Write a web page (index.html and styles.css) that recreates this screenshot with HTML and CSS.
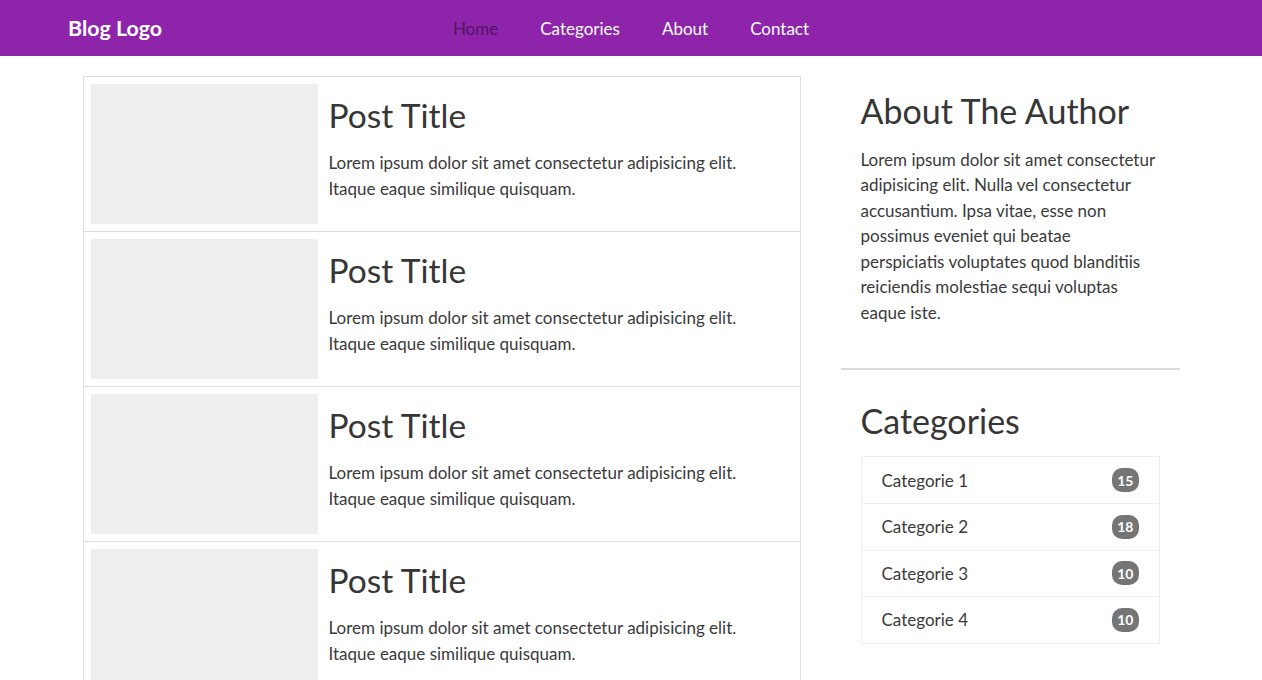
FILE: index.html
```html
<!DOCTYPE html>
<html lang="en">
<head>
<meta charset="utf-8">
<title>Blog</title>
<link rel="stylesheet" href="styles.css">
</head>
<body>
<header class="navbar">
  <a class="brand" href="#">Blog Logo</a>
  <nav class="nav">
    <a class="nav-link active" href="#">Home</a>
    <a class="nav-link" href="#">Categories</a>
    <a class="nav-link" href="#">About</a>
    <a class="nav-link" href="#">Contact</a>
  </nav>
  <div></div>
</header>
<main class="page">
  <section class="posts">
    <article class="post">
      <div class="thumb"></div>
      <div class="post-body">
        <h2 class="post-title">Post Title</h2>
        <p class="post-text">Lorem ipsum dolor sit amet consectetur adipisicing elit. Itaque eaque similique quisquam.</p>
      </div>
    </article>
    <article class="post">
      <div class="thumb"></div>
      <div class="post-body">
        <h2 class="post-title">Post Title</h2>
        <p class="post-text">Lorem ipsum dolor sit amet consectetur adipisicing elit. Itaque eaque similique quisquam.</p>
      </div>
    </article>
    <article class="post">
      <div class="thumb"></div>
      <div class="post-body">
        <h2 class="post-title">Post Title</h2>
        <p class="post-text">Lorem ipsum dolor sit amet consectetur adipisicing elit. Itaque eaque similique quisquam.</p>
      </div>
    </article>
    <article class="post">
      <div class="thumb"></div>
      <div class="post-body">
        <h2 class="post-title">Post Title</h2>
        <p class="post-text">Lorem ipsum dolor sit amet consectetur adipisicing elit. Itaque eaque similique quisquam.</p>
      </div>
    </article>
  </section>
  <aside class="sidebar">
    <div class="widget about">
      <h2 class="widget-title">About The Author</h2>
      <p class="widget-text">Lorem ipsum dolor sit amet consectetur<br>adipisicing elit. Nulla vel consectetur<br>accusantium. Ipsa vitae, esse non<br>possimus eveniet qui beatae<br>perspiciatis voluptates quod blanditiis<br>reiciendis molestiae sequi voluptas<br>eaque iste.</p>
    </div>
    <hr class="divider">
    <div class="widget">
      <h2 class="widget-title">Categories</h2>
      <ul class="cat-list">
        <li class="cat-item"><span>Categorie 1</span><span class="badge">15</span></li>
        <li class="cat-item"><span>Categorie 2</span><span class="badge">18</span></li>
        <li class="cat-item"><span>Categorie 3</span><span class="badge">10</span></li>
        <li class="cat-item"><span>Categorie 4</span><span class="badge">10</span></li>
      </ul>
    </div>
  </aside>
</main>
</body>
</html>
```
FILE: styles.css
```css
* { box-sizing: border-box; }
body {
  margin: 0;
  font-family: "Lato", "Noto Sans", sans-serif;
  font-size: 17px;
  color: #3a3a3a;
  background: #fff;
}
a { text-decoration: none; }

.navbar {
  height: 56px;
  background: #8e24aa;
  display: grid;
  grid-template-columns: 1fr auto 1fr;
  align-items: center;
  padding: 0 68px;
}
.brand {
  color: #fff;
  font-weight: 700;
  font-size: 21.4px;
  justify-self: start;
}
.nav { display: flex; }
.nav-link {
  color: #fff;
  font-size: 17px;
  padding: 0 21px;
}
.nav-link.active { color: #4e1663; }

.page {
  width: 1097px;
  margin: 20px auto 0;
  display: flex;
  gap: 40px;
  align-items: flex-start;
}
.posts {
  width: 718px;
  flex: none;
  border: 1px solid #dedede;
}
.post {
  display: flex;
  padding: 7px;
  border-top: 1px solid #dedede;
}
.post:first-child { border-top: none; }
.thumb {
  width: 227px;
  height: 140px;
  background: #eee;
  flex: none;
}
.post-body { margin-left: 11px; }
.post-title {
  font-size: 33.5px;
  font-weight: 400;
  margin: 11px 0 15px;
  line-height: 1.2;
  color: #363636;
}
.post-text {
  margin: 0;
  max-width: 440px;
  line-height: 26px;
}

.sidebar { width: 339px; flex: none; }
.widget { padding: 15px 20px 20px; }
.widget-title {
  font-size: 34px;
  font-weight: 400;
  line-height: 1.2;
  margin: 0 0 15px;
  color: #363636;
}
.widget-text {
  margin: 0;
  line-height: 25.5px;
  white-space: nowrap;
}
.divider {
  border: none;
  border-top: 2px solid #ddd;
  margin: 23px 0 16px;
}
.widget + .divider + .widget .widget-title { margin-bottom: 14px; }
.cat-list {
  list-style: none;
  margin: 0;
  padding: 0;
  border: 1px solid #eee;
}
.cat-item {
  display: flex;
  justify-content: space-between;
  align-items: center;
  height: 46.5px;
  padding: 0 20px;
  border-top: 1px solid #eee;
}
.cat-item:first-child { border-top: none; height: 46px; }
.badge {
  display: inline-flex;
  align-items: center;
  justify-content: center;
  min-width: 25px;
  height: 24px;
  background: #757575;
  color: #fff;
  font-weight: 700;
  font-size: 14px;
  border-radius: 10px;
  padding: 0 5px;
}
```
